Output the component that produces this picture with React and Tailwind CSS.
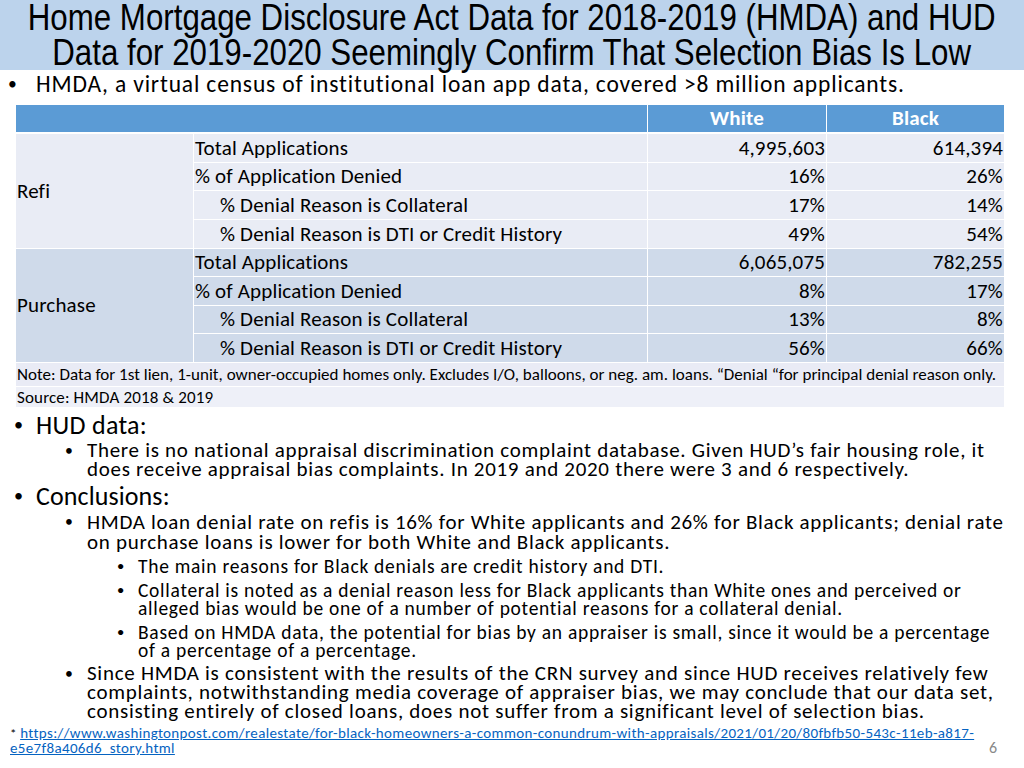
import React from 'react';

const BODY = "font-['Carlito','Calibri','Lato',sans-serif]";

const refi = [
  ['Total Applications', '4,995,603', '614,394', false],
  ['% of Application Denied', '16%', '26%', false],
  ['% Denial Reason is Collateral', '17%', '14%', true],
  ['% Denial Reason is DTI or Credit History', '49%', '54%', true],
];
const purchase = [
  ['Total Applications', '6,065,075', '782,255', false],
  ['% of Application Denied', '8%', '17%', false],
  ['% Denial Reason is Collateral', '13%', '8%', true],
  ['% Denial Reason is DTI or Credit History', '56%', '66%', true],
];
const ROW_H = ['h-[28px]', 'h-[27px]', 'h-[28px]', 'h-[28px]'];
const ROW_H2 = ['h-[27px]', 'h-[28px]', 'h-[27px]', 'h-[28px]'];

function Block({ label, rows, bg, heights }) {
  return (
    <div className="flex gap-x-[1px]">
      <div className={`w-[177px] ${bg} flex items-center pl-[1px]`}>{label}</div>
      <div className="flex flex-col gap-y-[1px]">
        {rows.map(([name, w, b, indent], i) => (
          <div key={i} className={`flex gap-x-[1px] ${heights[i]}`}>
            <div className={`w-[453px] ${bg} flex items-center ${indent ? 'pl-[26px]' : 'pl-[1px]'}`}>{name}</div>
            <div className={`w-[178px] ${bg} flex items-center justify-end pr-[1px]`}>{w}</div>
            <div className={`w-[177px] ${bg} flex items-center justify-end pr-[1px]`}>{b}</div>
          </div>
        ))}
      </div>
    </div>
  );
}

// each line gets its own box so the slide's tight line spacing holds
function Bullet({ x, gap, lines, lh, className = '', dot = 'text-[0.75em]' }) {
  return (
    <div className={`flex ${className}`} style={{ paddingLeft: x }}>
      <span className={`shrink-0 ${dot}`} style={{ width: gap, lineHeight: `${lh}px` }}>•</span>
      <div>
        {lines.map((t, i) => (
          <div key={i} className="whitespace-nowrap" style={{ height: lh, lineHeight: `${lh}px` }}>{t}</div>
        ))}
      </div>
    </div>
  );
}

export default function App() {
  return (
    <div className={`w-[1024px] h-[768px] bg-white overflow-hidden text-black ${BODY}`}>
      <div className="h-[70px] bg-[#bcd3ec] flex flex-col items-center text-[37px] leading-[35px] font-['Liberation_Sans_Narrow','Arial_Narrow','Liberation_Sans',sans-serif]">
        <div className="w-max shrink-0 scale-x-[0.845] whitespace-nowrap">Home Mortgage Disclosure Act Data for 2018-2019 (HMDA) and HUD</div>
        <div className="w-max shrink-0 scale-x-[0.845] whitespace-nowrap">Data for 2019-2020 Seemingly Confirm That Selection Bias Is Low</div>
      </div>

      <div className="h-[35px] text-[23.5px] tracking-[0.85px]">
        <Bullet x={8} gap={28} lh={28} lines={['HMDA, a virtual census of institutional loan app data, covered >8 million applicants.']} />
      </div>

      <div className="ml-[16px] w-[988px] text-[21px] tracking-[0.15px] leading-none">
        <div className="flex gap-x-[1px] h-[27px] mb-[2px] text-white font-bold">
          <div className="w-[631px] bg-[#5b9bd5]" />
          <div className="w-[178px] bg-[#5b9bd5] flex items-center justify-center">White</div>
          <div className="w-[177px] bg-[#5b9bd5] flex items-center justify-center">Black</div>
        </div>
        <div className="flex flex-col gap-y-[1px]">
          <Block label="Refi" rows={refi} bg="bg-[#e9ecf5]" heights={ROW_H} />
          <Block label="Purchase" rows={purchase} bg="bg-[#cfdaea]" heights={ROW_H2} />
          <div className="h-[23px] bg-[#e9ebf5] flex items-center pl-[1px] text-[17px] tracking-[0.02px] whitespace-nowrap">
            Note: Data for 1st lien, 1-unit, owner-occupied homes only. Excludes I/O, balloons, or neg. am. loans. “Denial “for principal denial reason only.
          </div>
          <div className="h-[20px] bg-[#eef0f8] flex items-center pl-[1px] text-[17px]">Source: HMDA 2018 &amp; 2019</div>
        </div>
      </div>

      <div className="mt-[5px] text-[26px] tracking-[0.3px]">
        <Bullet x={14} gap={22} lh={26} dot="text-[0.7em]" lines={['HUD data:']} />
      </div>
      <div className="mt-[3px] text-[21px] tracking-[0.7px]">
        <Bullet x={65} gap={22} lh={19} lines={[
          'There is no national appraisal discrimination complaint database. Given HUD’s fair housing role, it',
          'does receive appraisal bias complaints. In 2019 and 2020 there were 3 and 6 respectively.',
        ]} />
      </div>
      <div className="mt-[4px] text-[26px] tracking-[0.1px]">
        <Bullet x={14} gap={22} lh={26} dot="text-[0.7em]" lines={['Conclusions:']} />
      </div>
      <div className="mt-[3px] text-[21px] tracking-[0.7px]">
        <Bullet x={65} gap={22} lh={20} lines={[
          'HMDA loan denial rate on refis is 16% for White applicants and 26% for Black applicants; denial rate',
          'on purchase loans is lower for both White and Black applicants.',
        ]} />
      </div>
      <div className="text-[19.5px] tracking-[0.72px]">
        <Bullet x={117} gap={21} lh={18} className="mt-[5px]" lines={['The main reasons for Black denials are credit history and DTI.']} />
        <Bullet x={117} gap={21} lh={18} className="mt-[6px]" lines={[
          'Collateral is noted as a denial reason less for Black applicants than White ones and perceived or',
          'alleged bias would be one of a number of potential reasons for a collateral denial.',
        ]} />
        <Bullet x={117} gap={21} lh={18} className="mt-[6px]" lines={[
          'Based on HMDA data, the potential for bias by an appraiser is small, since it would be a percentage',
          'of a percentage of a percentage.',
        ]} />
      </div>
      <div className="mt-[5px] text-[21px] tracking-[0.72px]">
        <Bullet x={65} gap={22} lh={19} lines={[
          'Since HMDA is consistent with the results of the CRN survey and since HUD receives relatively few',
          'complaints, notwithstanding media coverage of appraiser bias, we may conclude that our data set,',
          'consisting entirely of closed loans, does not suffer from a significant level of selection bias.',
        ]} />
      </div>
      <div className="mt-[5px] pl-[10px] pr-[27px] flex justify-between items-end leading-[14px]">
        <div className="text-[15px] tracking-[0.35px] whitespace-nowrap">
          <div>
            <span className="text-[13px]">* </span>
            <a className="text-[#0563c1] underline">https://www.washingtonpost.com/realestate/for-black-homeowners-a-common-conundrum-with-appraisals/2021/01/20/80fbfb50-543c-11eb-a817-</a>
          </div>
          <div>
            <a className="text-[#0563c1] underline">e5e7f8a406d6_story.html</a>
          </div>
        </div>
        <div className="text-[16px] text-[#888888]">6</div>
      </div>
    </div>
  );
}
